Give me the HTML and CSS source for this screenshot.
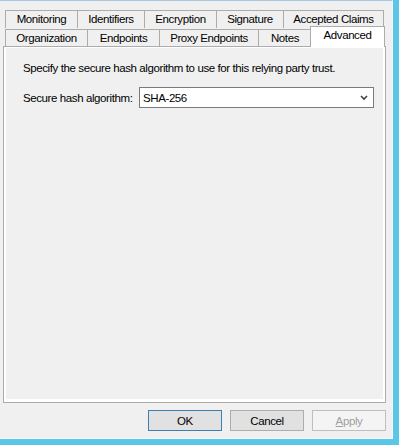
FILE: index.html
```html
<!DOCTYPE html>
<html lang="en">
<head>
    <meta charset="UTF-8">
    <title>Relying Party Trust Properties</title>
    <link rel="stylesheet" href="styles.css">
</head>
<body>
    <div class="window">
        <div class="tabs">
            <div class="tab-row">
                <div class="tab w-monitoring">Monitoring</div>
                <div class="tab w-identifiers">Identifiers</div>
                <div class="tab w-encryption">Encryption</div>
                <div class="tab w-signature">Signature</div>
                <div class="tab w-claims">Accepted Claims</div>
            </div>
            <div class="tab-row front">
                <div class="tab w-organization">Organization</div>
                <div class="tab w-endpoints">Endpoints</div>
                <div class="tab w-proxy">Proxy Endpoints</div>
                <div class="tab w-notes">Notes</div>
                <div class="tab selected w-advanced">Advanced</div>
            </div>
        </div>

        <div class="panel">
            <div class="page">
                <p class="intro">Specify the secure hash algorithm to use for this relying party trust.</p>
                <div class="field">
                    <label class="field-label">Secure hash algorithm:</label>
                    <div class="select">
                        <span>SHA-256</span>
                        <svg class="chevron" width="8" height="6" viewBox="0 0 8 6">
                            <polyline points="1,1 4,4 7,1" fill="none" stroke="#444" stroke-width="1.6"/>
                        </svg>
                    </div>
                </div>
            </div>
        </div>

        <div class="buttons">
            <button class="btn default">OK</button>
            <button class="btn">Cancel</button>
            <button class="btn disabled"><u>A</u>pply</button>
        </div>
    </div>
</body>
</html>
```

FILE: styles.css
```css
* {
    margin: 0;
    padding: 0;
    box-sizing: border-box;
}

body {
    font-family: "Liberation Sans", Arial, sans-serif;
    font-size: 11.5px;
    letter-spacing: -0.4px;
    color: #000;
    background: #5ac6e8;
    width: 399px;
    height: 445px;
    overflow: hidden;
}

.window {
    width: 393px;
    height: 439px;
    background: #f0f0f0;
    border-top: 1px solid #a9c8e2;
    border-right: 1px solid #f9f9f9;
    border-bottom: 1px solid #f9f9f9;
    display: flex;
    flex-direction: column;
}

/* tabs */
.tabs {
    margin-top: 9px;
    padding-left: 5px;
}

.tab-row {
    display: flex;
    align-items: flex-end;
}

.tab-row.front {
    margin-top: -2px;
    margin-bottom: -1px;
}

.tab {
    height: 18px;
    border: 1px solid #acacac;
    border-bottom: none;
    background: #f0f0f0;
    display: flex;
    align-items: center;
    justify-content: center;
    line-height: 15px;
    white-space: nowrap;
    margin-left: -1px;
}

.tab:first-child {
    margin-left: 0;
}

.tab.selected {
    position: relative;
    z-index: 1;
    height: 21px;
    margin-left: -2px;
    background: #fff;
    padding-bottom: 3px;
}

.w-monitoring { width: 73px; }
.w-identifiers { width: 68px; }
.w-encryption { width: 73px; }
.w-signature { width: 68px; }
.w-claims { width: 101px; }
.w-organization { width: 83px; }
.w-endpoints { width: 73px; }
.w-proxy { width: 100px; }
.w-notes { width: 54px; }
.w-advanced { width: 75px; }

/* page */
.panel {
    margin-left: 3px;
    width: 383px;
    height: 357px;
    border: 1px solid #acacac;
    background: #fff;
    padding: 1px 2px 3px 2px;
    display: flex;
}

.page {
    flex: 1;
    background: #f0f0f0;
    padding: 13px 8px 0 17px;
}

.intro {
    line-height: 15px;
    margin-bottom: 11px;
}

.field {
    display: flex;
    align-items: center;
}

.field-label {
    width: 116px;
}

.select {
    width: 235px;
    height: 21px;
    background: #fff;
    border: 1px solid #7a7a7a;
    display: flex;
    align-items: center;
    justify-content: space-between;
    padding: 0 5px 0 3px;
}

.chevron {
    display: block;
}

/* buttons */
.buttons {
    display: flex;
    justify-content: flex-end;
    gap: 8px;
    margin-top: 7px;
    padding-right: 6px;
}

.btn {
    width: 74px;
    height: 21px;
    font-family: inherit;
    font-size: 11.5px;
    letter-spacing: -0.4px;
    color: #000;
    background: #e1e1e1;
    border: 1px solid #adadad;
}

.btn.default {
    border-color: #3c7fb1;
}

.btn.disabled {
    color: #a0a0a0;
    background: #f4f4f4;
    border-color: #bfbfbf;
}
```
